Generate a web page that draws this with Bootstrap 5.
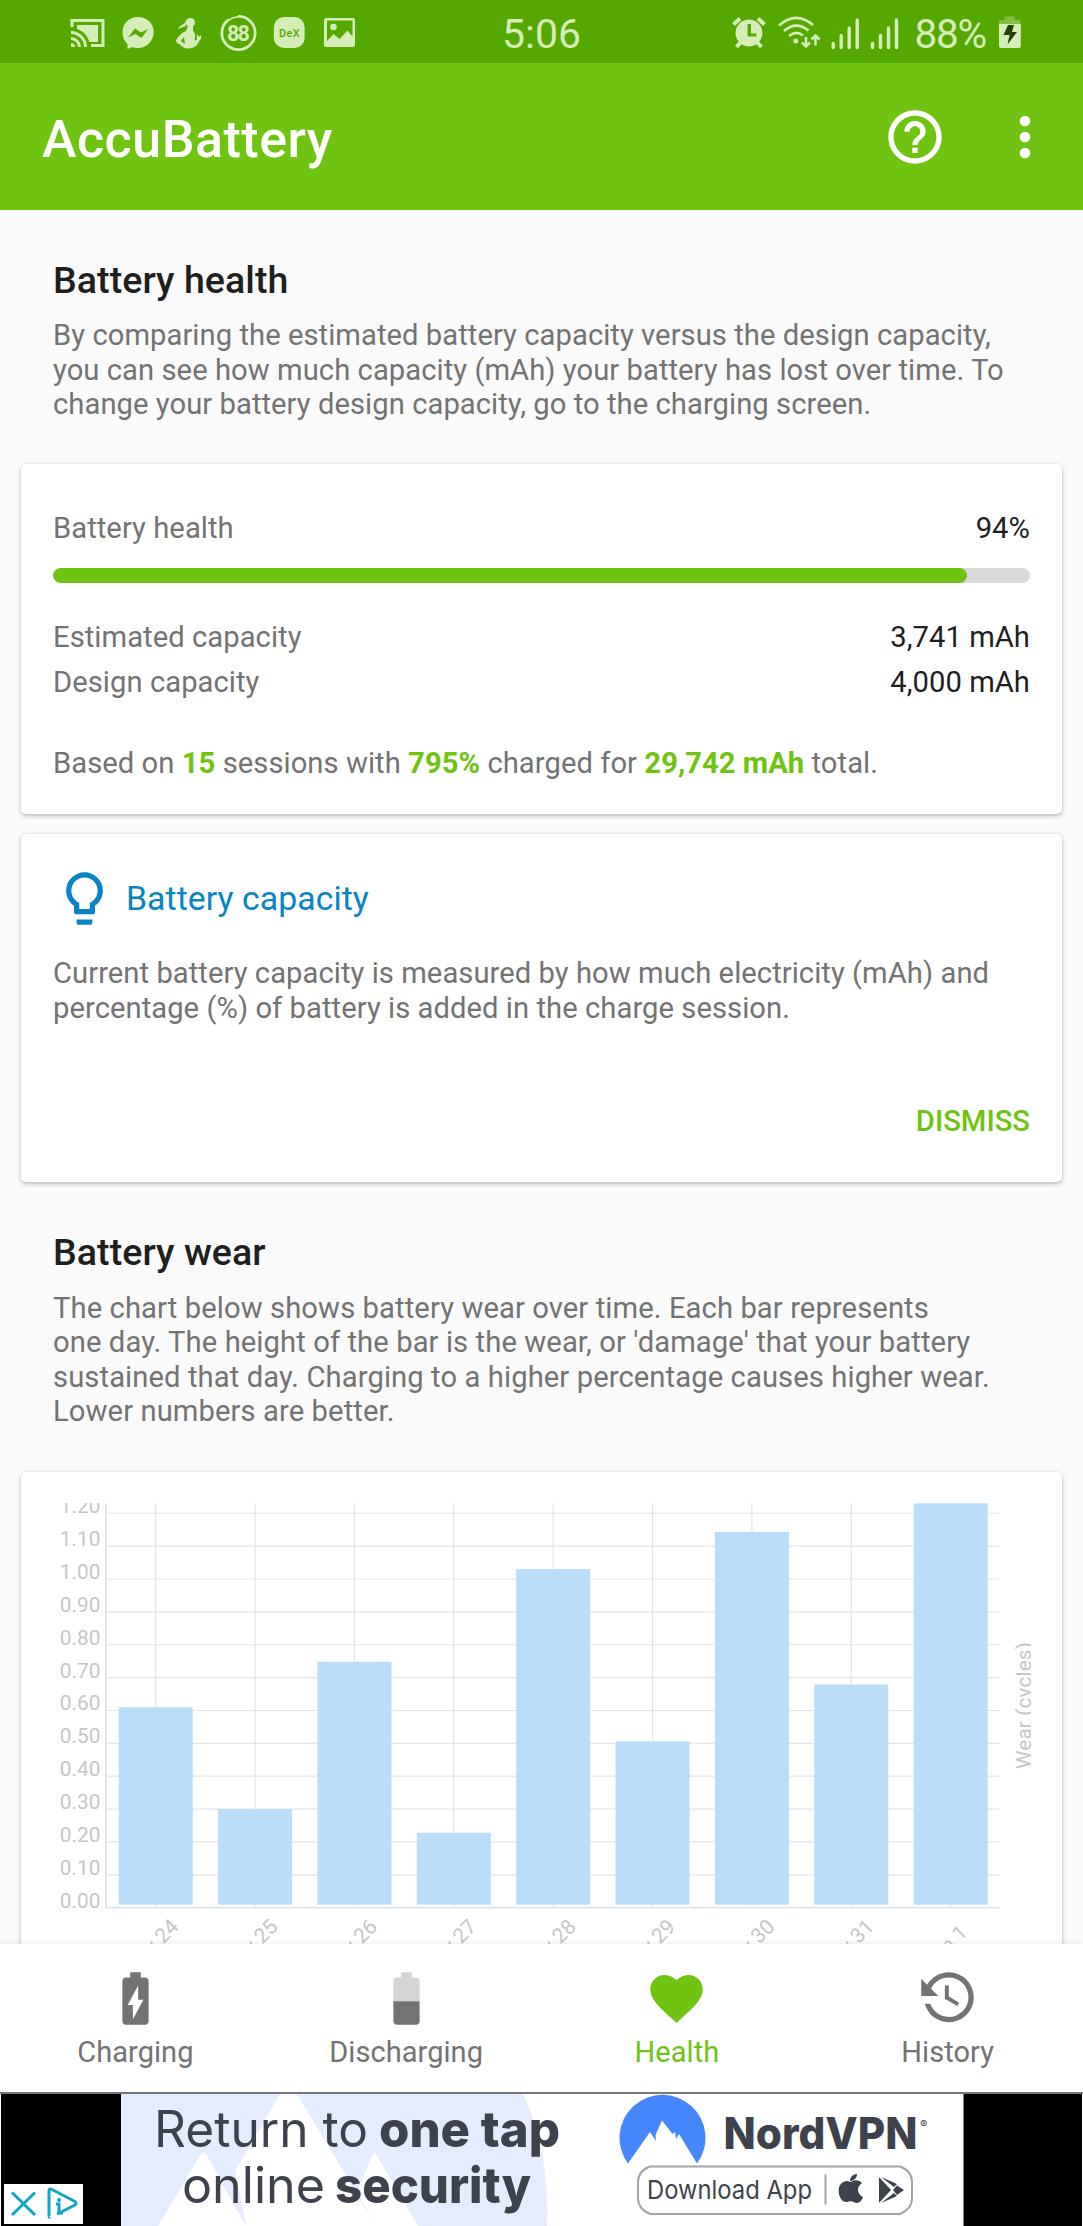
<!DOCTYPE html>
<html lang="en">
<head>
<meta charset="utf-8">
<meta name="viewport" content="width=device-width, initial-scale=1">
<title>AccuBattery</title>
<link href="https://cdn.jsdelivr.net/npm/bootstrap@5.3.0/dist/css/bootstrap.min.css" rel="stylesheet">
<style>
  :root { --accu: #6fc412; --accu-dark: #54a800; --status: #d5edb9; --ink: #1f1f1f; --soft: #737373; }
  body { font-family: Roboto, "Liberation Sans", sans-serif; font-size: 29.2px; line-height: 34.6px; letter-spacing: .05px; color: var(--soft); background: #fafafa; height: 2226px; overflow: hidden; }
  svg { display: block; flex: none; }
  .status-bar { height: 63px; background: var(--accu-dark); color: var(--status); fill: var(--status); padding: 0 62px 0 70px; font-size: 41px; }
  .status-bar > div { flex: 1 1 0; }
  .pct { font-size: 40.5px; letter-spacing: -1.2px; padding: 5px 13px 0 14px; line-height: 58px; }
  .clock-text { padding-top: 5px; margin-right: 8px; }
  .gap-person { margin-left: 17px; }
  .gap-badge { margin-left: 15px; }
  .gap-photo { margin-left: 16px; }
  .gap-wifi { margin-left: 10px; }
  .gap-signal { margin-left: 8px; }
  .gap-menu { margin-left: 46px; }
  .app-bar { height: 147px; background: var(--accu); padding: 0 26px 0 42px; }
  .app-bar h1 { font-size: 52px; font-weight: 500; line-height: 60px; color: #fff; letter-spacing: .5px; padding-top: 6px; }
  .intro { padding: 0 32px; }
  .intro h2 { font-size: 37.6px; font-weight: 500; line-height: 44px; color: var(--ink); margin-bottom: 16.2px; }
  .intro p, .tip p { margin: 0; white-space: nowrap; }
  .screen { padding: 47.8px 21px 0; }
  .panel { border: 0; border-radius: 5px; background: #fff; box-shadow: 0 2px 5px rgba(0,0,0,.24), 0 0 2px rgba(0,0,0,.1); padding: 0 32px; }
  .health { height: 349.5px; margin: 42.7px 0 20.5px; padding-top: 46.4px; }
  .tip { height: 348px; padding-top: 33px; }
  .value { color: var(--ink); }
  .meter { height: 15.5px; border-radius: 8px; background: #d9d9d9; margin: 22.5px 0 36.4px; }
  .meter .progress-bar { border-radius: 8px; background: var(--accu); }
  .stat-row + .stat-row { margin-top: 10.2px; }
  .basis { margin: 47px 0 0; white-space: nowrap; }
  .basis b { color: var(--accu); font-weight: 700; }
  .tip-title { color: #0684c6; font-size: 33.8px; line-height: 63px; gap: 10px; margin-bottom: 25.5px; }
  .dismiss { font-size: 29.2px; font-weight: 500; line-height: 35px; color: var(--accu); margin-top: 79px; }
  .wear-intro { padding-top: 48px; }
  .wear-intro p { letter-spacing: .09px; }
  .chart-panel { margin-top: 42.9px; padding: 31px 32px 0; height: 560px; }
  .chart text { fill: #c7c7c7; font-size: 20.8px; }
  .tabs { height: 148px; background: #fff; box-shadow: 0 -1px 6px rgba(0,0,0,.08); z-index: 2; }
  .tabs .nav-link { padding: 22.5px 0 0; color: var(--soft); fill: currentColor; line-height: 34px; gap: 5.5px; font-size: 29px; }
  .tabs .nav-link.active { color: var(--accu); }
  .ad { height: 134px; border-top: 2.5px solid #777; background: #000; z-index: 3; letter-spacing: 0; }
</style>
</head>
<body class="d-flex flex-column">

<div class="status-bar d-flex align-items-center flex-shrink-0">
  <div class="d-flex align-items-center">
    <svg width="35" height="63" viewBox="70 0 35 63">
      <g fill="none" stroke="#d5edb9" stroke-width="3"><path d="M72 27V20.500H103V45.500H91"/><path d="M71 32.500A14.500 14.500 0 0 1 85.500 47M71 26.500"/><path d="M71 38.500A8.500 8.500 0 0 1 79.500 47"/></g>
      <path d="M71 43a4 4 0 0 1 4 4h-4zM77 25h21v17H89.500C87 35 83 31 77 29z"/>
    </svg>
    <svg class="ms-3" width="35" height="63" viewBox="121 0 35 63"><path d="M138 17c9 0 15.700 6.500 15.700 15S147 48 138 48c-2 0-4-.4-5.500-1L127.500 49v-5c-3.500-3-5-7-5-12 0-8.500 6.500-15 15.500-15z"/><path fill="#54a800" d="M128 37.500 135 28.500 141 32.500 148 29 141.500 38 135.500 34z"/></svg>
    <svg class="gap-person" width="30" height="63" viewBox="173 0 30 63"><circle cx="190.500" cy="22.500" r="4.500"/><path d="M187 19c-2 2-1 4-4 5.500-2.500 1-4 2-5 5 3-2.500 6-2 8-4zM188 26h5v5c2.500 2 2.500 6 1.500 9 2 1.500 3.500-1 2-4 .5-2 2-1 2.500 1l2-2c1 3-.5 5-2 6-1.500 5.500-6 7.500-11 7.500-4 0-6-2-8-4-2-.5-4-2-4-4 2-4 6-8 10-9.500zM184 37l-3 4 4 3z"/></svg>
    <svg class="gap-badge" width="40" height="63" viewBox="218 0 40 63"><circle cx="238.500" cy="33" r="16.700" fill="none" stroke="#d5edb9" stroke-width="2.800"/><path fill="none" stroke="#54a800" stroke-width="2" d="M228 18.500Q232 15.500 238 15"/><text x="227" y="41" textLength="23" font-size="21.500" font-weight="700">88</text></svg>
    <svg class="gap-badge" width="34" height="63" viewBox="273 0 34 63"><rect x="273.900" y="17" width="30.700" height="31" rx="10"/><text x="279" y="36.500" textLength="20.500" font-size="10.800" font-weight="500" fill="#54a800">DeX</text></svg>
    <svg class="gap-photo" width="32" height="63" viewBox="323 0 32 63"><path fill-rule="evenodd" d="M326 18h27a2 2 0 0 1 2 2v25a2 2 0 0 1-2 2h-27a2 2 0 0 1-2-2V20a2 2 0 0 1 2-2zM327 20.500V41l6.500-7 6 5 8-8.500 5 6V20.500z"/><circle cx="333.500" cy="27" r="3.300"/></svg>
  </div>
  <span class="clock-text">5:06</span>
  <div class="d-flex align-items-center justify-content-end">
    <svg width="36" height="63" viewBox="731 0 36 63"><path fill-rule="evenodd" d="M749 19.500a13.500 13.500 0 1 1-.1 0zM747.500 24v12.500h9v-3H751V24z"/><path fill="none" stroke="#d5edb9" stroke-width="4" d="M733.500 24.500 740 18.500M764.500 24.500 758 18.500M741 42 736.500 47M757 42 761.500 47"/></svg>
    <svg class="gap-wifi" width="45" height="63" viewBox="777 0 45 63"><g fill="none" stroke="#d5edb9" stroke-width="2.800"><path d="M779 25.500Q796 10.500 813 25M784 31Q796 20.500 808.500 30.500M789 36Q796 30 803 35.500"/><path stroke-width="2.500" d="M806 37v9M802 42.500l4 4 4-4M815.500 45.500v-10M811.500 39.500l4-4 4 4"/></g><circle cx="795.800" cy="41" r="2.500"/></svg>
    <svg class="gap-signal" width="70" height="63" viewBox="830 0 70 63"><path fill="none" stroke="#d5edb9" stroke-width="3.400" stroke-linecap="round" d="M833.200 43.500v4M841.200 35.500v12M849.200 28v19.500M857.200 20v27.500M872.500 43.500v4M880.500 35.500v12M888.500 28v19.500M896.500 20v27.500"/></svg>
    <span class="pct">88%</span>
    <svg width="22" height="63" viewBox="999 0 22 63"><path opacity=".35" d="M1004.500 16.500h10V20h6v4.500H999V20h5.500z"/><path d="M999 24h21.800v22a2 2 0 0 1-2 2H1001a2 2 0 0 1-2-2z"/><path fill="#234006" d="M1008 25h6l-2 7h5l-9.500 12.500 2-9.500h-6z"/></svg>
  </div>
</div>

<header class="app-bar d-flex align-items-center flex-shrink-0">
  <h1 class="mb-0 me-auto">AccuBattery</h1>
  <svg width="64" height="64" viewBox="0 0 24 24" fill="#fff"><path d="M11 18h2v-2h-2v2zm1-16C6.480 2 2 6.480 2 12s4.480 10 10 10 10-4.480 10-10S17.520 2 12 2zm0 18c-4.410 0-8-3.590-8-8s3.590-8 8-8 8 3.590 8 8-3.590 8-8 8zm0-14c-2.210 0-4 1.790-4 4h2c0-1.100.9-2 2-2s2 .9 2 2c0 2-3 1.750-3 5h2c0-2.250 3-2.500 3-5 0-2.210-1.790-4-4-4z"/></svg>
  <svg class="gap-menu" width="64" height="64" viewBox="0 0 24 24" fill="#fff"><circle cx="12" cy="6" r="2"/><circle cx="12" cy="12" r="2"/><circle cx="12" cy="18" r="2"/></svg>
</header>

<main class="screen flex-fill overflow-hidden">
  <section class="intro">
    <h2>Battery health</h2>
    <p>By comparing the estimated battery capacity versus the design capacity,<br>you can see how much capacity (mAh) your battery has lost over time. To<br>change your battery design capacity, go to the charging screen.</p>
  </section>

  <section class="card panel health">
    <div class="d-flex justify-content-between"><span>Battery health</span><span class="value">94%</span></div>
    <div class="progress meter" role="progressbar" aria-valuenow="94" aria-valuemin="0" aria-valuemax="100"><div class="progress-bar" style="width:93.600%"></div></div>
    <div class="stat-row d-flex justify-content-between"><span>Estimated capacity</span><span class="value">3,741 mAh</span></div>
    <div class="stat-row d-flex justify-content-between"><span>Design capacity</span><span class="value">4,000 mAh</span></div>
    <p class="basis">Based on <b>15</b> sessions with <b>795%</b> charged for <b>29,742 mAh</b> total.</p>
  </section>

  <section class="card panel tip">
    <div class="tip-title d-flex align-items-center">
      <svg width="63" height="63" viewBox="0 0 24 24" fill="#0684c6"><path d="M12,2A7,7 0 0,1 19,9C19,11.380 17.810,13.470 16,14.740V17A1,1 0 0,1 15,18H9A1,1 0 0,1 8,17V14.740C6.190,13.470 5,11.380 5,9A7,7 0 0,1 12,2M9,21V20H15V21A1,1 0 0,1 14,22H10A1,1 0 0,1 9,21M12,4A5,5 0 0,0 7,9C7,11.050 8.230,12.810 10,13.580V16H14V13.580C15.770,12.810 17,11.050 17,9A5,5 0 0,0 12,4Z"/></svg>
      <span>Battery capacity</span>
    </div>
    <p>Current battery capacity is measured by how much electricity (mAh) and<br>percentage (%) of battery is added in the charge session.</p>
    <button class="btn p-0 border-0 align-self-end dismiss">DISMISS</button>
  </section>

  <section class="intro wear-intro">
    <h2>Battery wear</h2>
    <p>The chart below shows battery wear over time. Each bar represents<br>one day. The height of the bar is the wear, or 'damage' that your battery<br>sustained that day. Charging to a higher percentage causes higher wear.<br>Lower numbers are better.</p>
  </section>

  <section class="card panel chart-panel">
    <svg class="chart" id="wearChart" width="978" height="460" viewBox="53 1503 978 460"></svg>
  </section>
</main>

<nav class="tabs nav nav-fill flex-nowrap flex-shrink-0 position-relative">
  <a class="nav-link col-3 d-flex flex-column align-items-center"><svg width="63" height="63" viewBox="0 0 24 24"><path d="M15.670 4H14V2h-4v2H8.330C7.600 4 7 4.600 7 5.330v15.330C7 21.400 7.600 22 8.330 22h7.330c.74 0 1.340-.6 1.340-1.330V5.330C17 4.600 16.400 4 15.670 4zM11 20v-5.500H9L13 7v5.500h2L11 20z"/></svg>Charging</a>
  <a class="nav-link col-3 d-flex flex-column align-items-center"><svg width="63" height="63" viewBox="0 0 24 24"><path opacity=".3" d="M17 5.330C17 4.600 16.400 4 15.670 4H14V2h-4v2H8.330C7.600 4 7 4.600 7 5.330V13h10V5.330z"/><path d="M7 13v7.670C7 21.400 7.600 22 8.330 22h7.330c.74 0 1.340-.6 1.340-1.330V13H7z"/></svg>Discharging</a>
  <a class="nav-link active col-3 d-flex flex-column align-items-center"><svg width="63" height="63" viewBox="0 0 24 24"><path d="M12 21.350l-1.450-1.320C5.400 15.360 2 12.280 2 8.500 2 5.420 4.420 3 7.500 3c1.740 0 3.410.81 4.500 2.090C13.090 3.810 14.760 3 16.500 3 19.580 3 22 5.420 22 8.500c0 3.780-3.400 6.860-8.550 11.540L12 21.350z"/></svg>Health</a>
  <a class="nav-link col-3 d-flex flex-column align-items-center"><svg width="63" height="63" viewBox="0 0 24 24"><path d="M11,7V12.110L15.710,14.900L16.500,13.620L12.500,11.250V7M12.500,2C8.970,2 5.910,3.920 4.270,6.770L2,4.500V11H8.500L5.750,8.250C6.960,5.730 9.500,4 12.500,4A7.500,7.500 0 0,1 20,11.500A7.500,7.500 0 0,1 12.500,19C9.230,19 6.470,16.910 5.440,14H3.340C4.440,18.030 8.110,21 12.500,21C17.740,21 22,16.750 22,11.500A9.500,9.500 0 0,0 12.500,2Z"/></svg>History</a>
</nav>

<aside class="ad flex-shrink-0 overflow-hidden position-relative">
  <svg width="1083" height="132" viewBox="0 2094 1083 132" fill="#3e424c">
    <path fill="#fff" d="M0 2094h1v132H0zM1082 2094h1v132h-1zM121 2094h842.500v132H121z"/>
    <path fill="#e4ecfd" d="M121 2094H523C541 2130 549 2180 547 2226H121z"/>
    <path fill="#fff" d="M158 2226 201 2154Q203.500 2151 206 2154L246 2226zM246 2226 235 2171 279 2096Q288 2088 298 2096L345 2174 372 2226zM355 2197 372 2156Q374.500 2151 377 2156L418 2226H368z"/>
    <path fill="#e4ecfd" d="M235 2171 246 2226 218 2176zM345 2174 372 2222 358 2192z"/>
    <g font-family="Inter, sans-serif">
      <g font-size="50"><text x="154" y="2147" textLength="214" lengthAdjust="spacingAndGlyphs">Return to</text><text x="379" y="2147" textLength="181" lengthAdjust="spacingAndGlyphs" font-weight="800">one tap</text>
      <text x="182" y="2202.500" textLength="143" lengthAdjust="spacingAndGlyphs">online</text><text x="335" y="2202.500" textLength="196" lengthAdjust="spacingAndGlyphs" font-weight="800">security</text></g>
      <text x="723.500" y="2149" font-size="44" font-weight="800" textLength="194" lengthAdjust="spacingAndGlyphs">NordVPN</text>
      <text x="920" y="2128" font-size="11">®</text>
      <text x="647" y="2199" font-size="26" textLength="165" lengthAdjust="spacingAndGlyphs">Download App</text>
    </g>
    <path fill="#4687ff" d="M628 2163.500A43 43 0 1 1 697 2163.500L679 2134 676 2139 675 2132 672.500 2134 662 2120.500 655.500 2135 656 2141 650 2132z"/>
    <path fill="none" stroke="#a2a4a8" stroke-width="2" d="M650 2166.500H900Q912 2171 912 2182V2198Q912 2209 900 2214H650Q638 2209 638 2198V2182Q638 2171 650 2166.500zM825.500 2174.500v30"/>
    <path d="M851 2182c3-3 9-2 11 1-6 4-5 11 1 14-2 6-6 7-9 5-3-1-4-1-7 0-9 1-13-20 0-21zM850 2181c0-4 3-7 7-7 0 4-3 7-7 7z"/>
    <path d="M879 2177v26l12-13zM881 2177l13 10 3-3zM881 2203l13-10 3 3zM897 2185.500l7 4.500-7 5-4-5z"/>
    <path fill="#fff" d="M4 2184h79v40H4z"/>
    <g fill="none" stroke="#10a7c4" stroke-width="3"><path d="M12 2192.500 35 2215M35 2192.500 12 2215"/><path d="M50 2217Q49 2218 49 2214V2191Q49 2188 52 2189.500L75 2201.500Q77 2203.500 75 2205L57 2214" stroke-linejoin="round"/><path d="M56 2204h3v9h4"/></g><circle cx="59" cy="2200" r="2" fill="#10a7c4"/>
  </svg>
</aside>

<script src="https://cdn.jsdelivr.net/npm/bootstrap@5.3.0/dist/js/bootstrap.bundle.min.js"></script>
<script>
  const days = [["May 24", .61], ["May 25", .30], ["May 26", .748], ["May 27", .228], ["May 28", 1.03], ["May 29", .506], ["May 30", 1.143], ["May 31", .679], ["Jun 1", 1.23]];
  const zero = 1907.7, unit = 328.7, top0 = 1503.3, left = 106, right = 999.5, step = 99.37;
  let s = "";
  for (let i = 0; i <= 12; i++) {
    const y = zero - i * unit / 10;
    if (i) s += `<path stroke="#e6e6e6" stroke-width="1.200" d="M${left} ${y}H${right}"/>`;
    s += `<text x="100.500" y="${y}" text-anchor="end">${(i / 10).toFixed(2)}</text>`;
  }
  days.forEach(([label, v], i) => {
    const x = 155.7 + i * step, y = Math.max(top0, zero - v * unit);
    s += `<path stroke="#e3e3e3" stroke-width="1.200" d="M${x} ${top0}V${zero}"/>`;
    s += `<rect x="${x - 37}" y="${y}" width="74" height="${1904.7 - y}" fill="#badefa"/>`;
    s += `<text transform="translate(${x} 1952) rotate(-45)" text-anchor="middle">${label}</text>`;
  });
  s += `<path fill="none" stroke="#e0e2e4" stroke-width="1.800" d="M${left} ${top0}V${zero}H${right}"/>`;
  s += `<text transform="translate(1030.600 1769) rotate(-90)" textLength="127">Wear (cycles)</text>`;
  document.getElementById("wearChart").innerHTML = s;
</script>
</body>
</html>
